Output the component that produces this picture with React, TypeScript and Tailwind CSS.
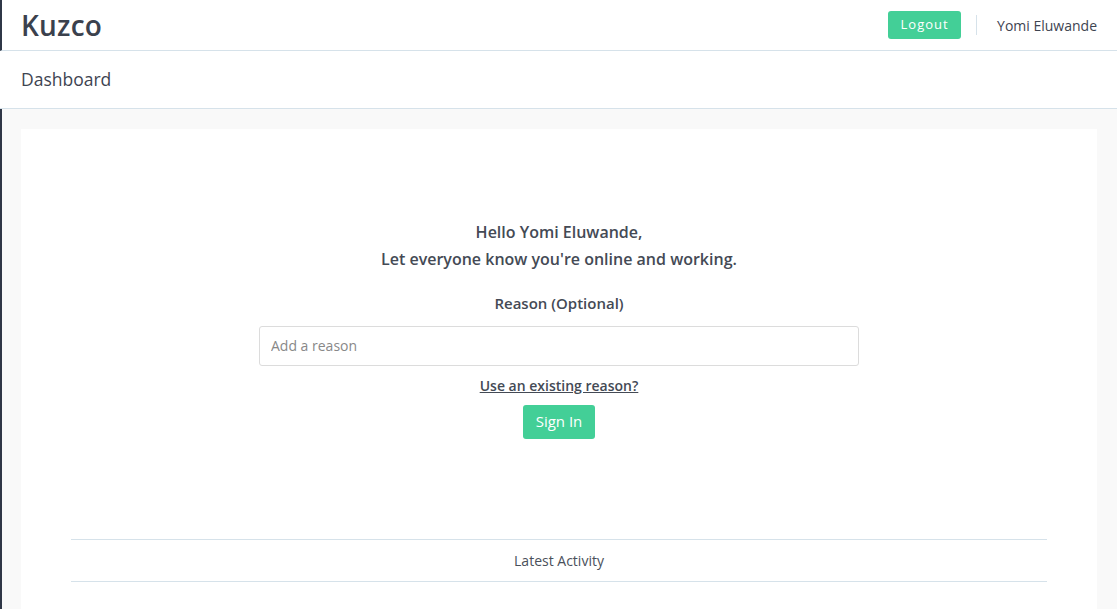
export default function App() {
  return (
    <div className="min-h-[609px] w-full bg-[#f9f9f9] font-['Open_Sans',_sans-serif] text-[#3e4451]">
      {/* top bar */}
      <header className="flex h-[51px] items-center justify-between border-b border-l-2 border-b-[#d6e2ea] border-l-[#2f3747] bg-white pl-[19px] pr-[20px]">
        <h1 className="text-[28px] font-semibold leading-none tracking-[0.2px] text-[#3b414d]">Kuzco</h1>
        <div className="flex items-center">
          <button
            type="button"
            className="h-[28px] w-[73px] rounded-[3px] bg-[#43cf97] text-[13px] tracking-[1px] text-white"
          >
            Logout
          </button>
          <div className="mx-[15px] h-[20px] w-px bg-[#d6e2ea]" />
          <span className="pl-[5px] text-[14px] text-[#3e4451]">Yomi Eluwande</span>
        </div>
      </header>

      {/* page title */}
      <div className="flex h-[58px] items-center border-b border-[#d6e2ea] bg-white px-[21px]">
        <h2 className="text-[17.5px] text-[#3e4451]">Dashboard</h2>
      </div>

      <main className="border-l-2 border-[#2f3747] pb-[20px] pl-[19px] pr-[20px] pt-[20px]">
        <section className="bg-white pt-[90px] pb-[30px]">
          <div className="flex flex-col items-center">
            <p className="text-[16px] font-semibold leading-[27px] text-[#444a55]">Hello Yomi Eluwande,</p>
            <p className="text-[16px] font-semibold leading-[27px] text-[#444a55]">
              Let everyone know you're online and working.
            </p>
            <label className="mt-[19px] text-[15px] font-semibold text-[#444a55]">Reason (Optional)</label>
            <input
              type="text"
              placeholder="Add a reason"
              className="mt-[11px] h-[40px] w-[600px] rounded-[3px] border border-[#dcdcdc] px-[11px] text-[14px] placeholder:text-[#888] outline-none"
            />
            <a href="#" className="mt-[9px] text-[14px] font-semibold text-[#444a55] underline">
              Use an existing reason?
            </a>
            <button
              type="button"
              className="mt-[9px] h-[34px] w-[72px] rounded-[3px] bg-[#43cf97] text-[15px] text-white"
            >
              Sign In
            </button>
          </div>

          <div className="mx-[50px] mt-[100px] flex h-[43px] items-center justify-center border-y border-[#d6e2ea]">
            <span className="text-[14px] text-[#4a505b]">Latest Activity</span>
          </div>
        </section>
      </main>
    </div>
  );
}
